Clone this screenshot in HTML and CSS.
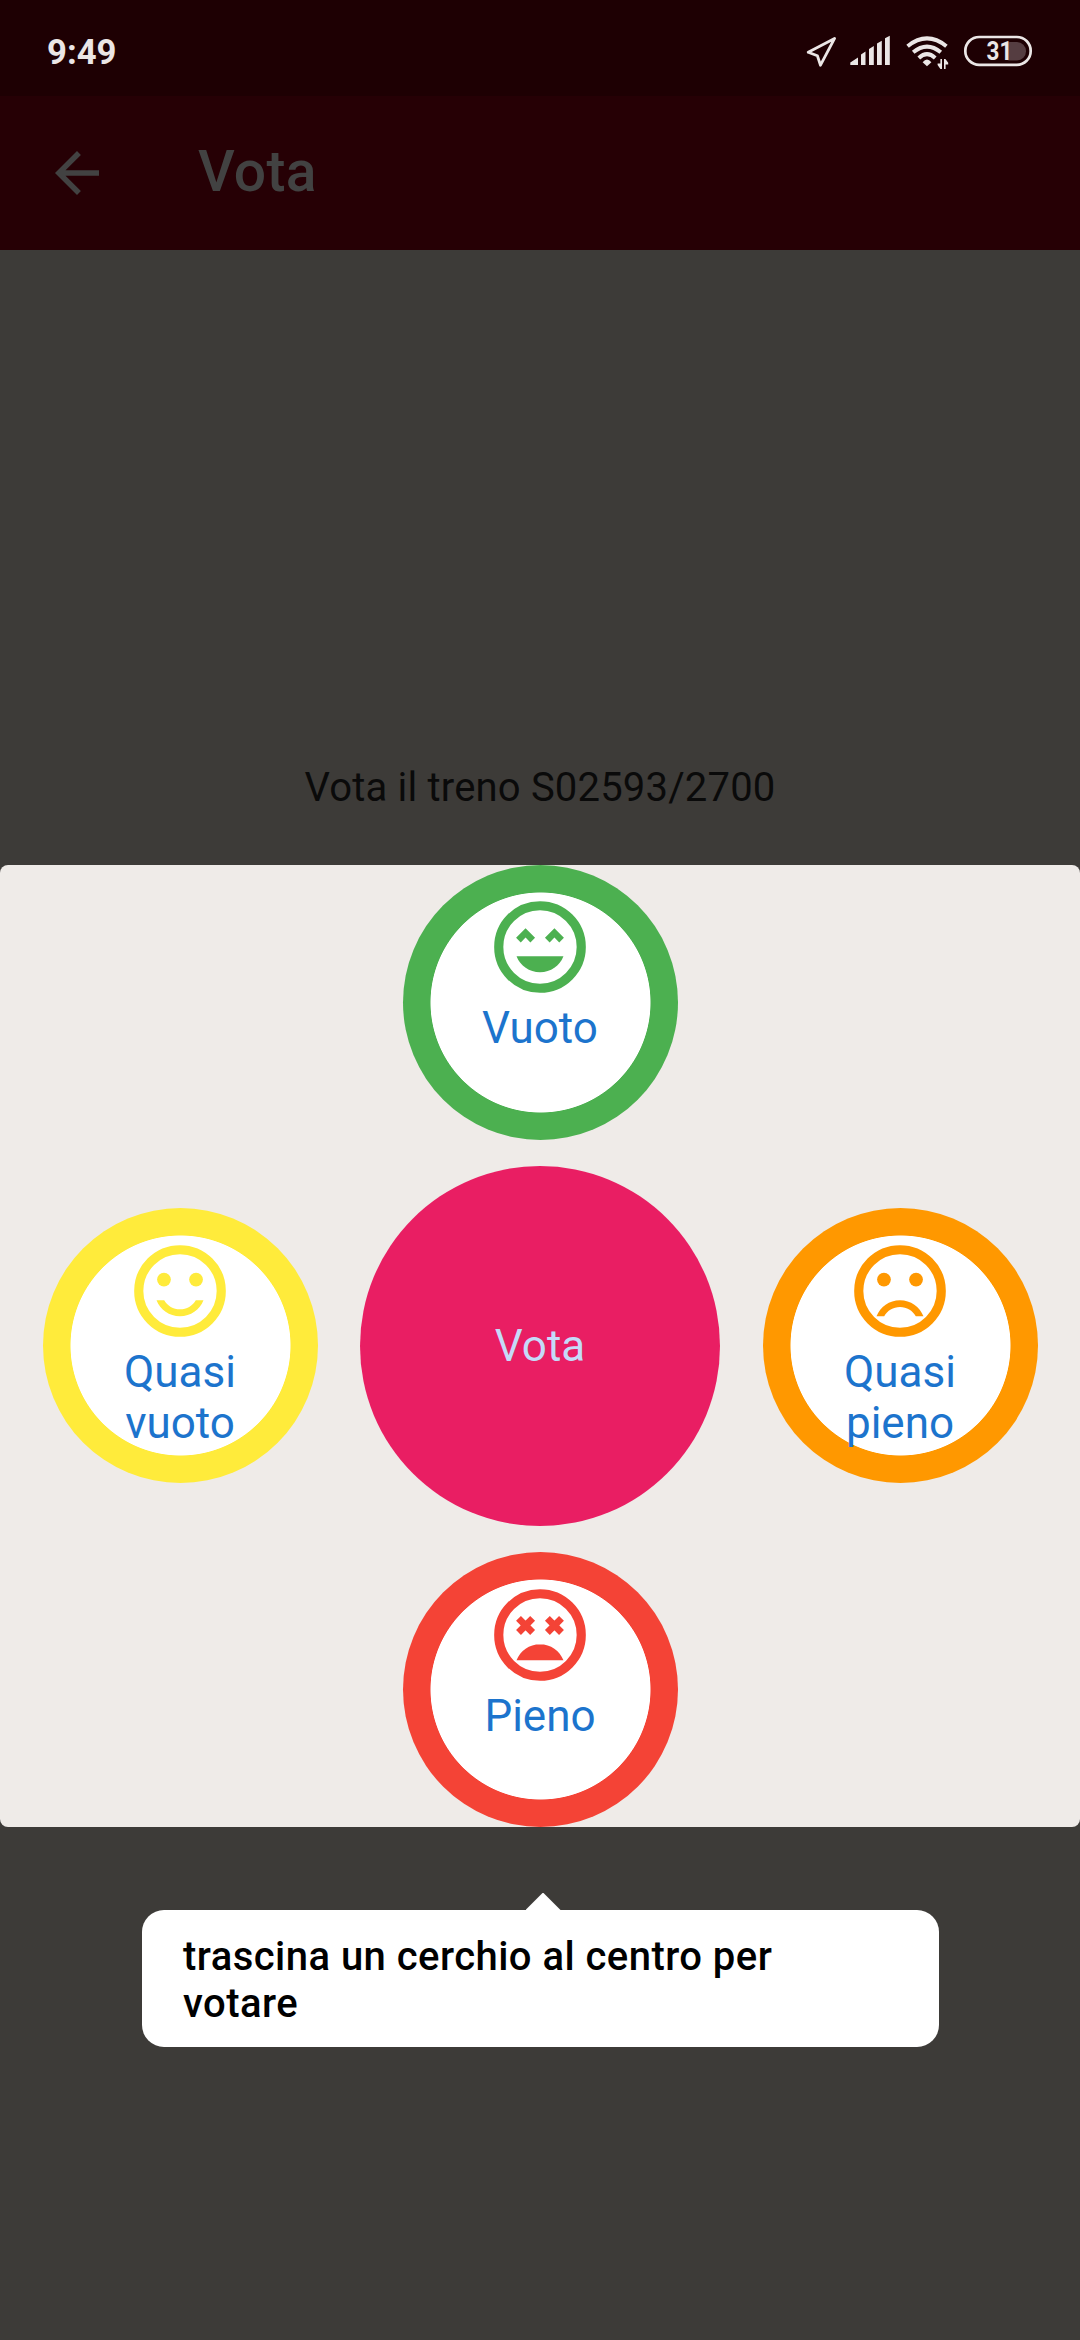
FILE: index.html
```html
<!DOCTYPE html>
<html lang="it">
<head>
<meta charset="utf-8">
<title>Vota</title>
<link rel="stylesheet" href="styles.css">
</head>
<body>
<div class="screen">
  <header class="status-bar">
    <span class="clock">9:49</span>
    <svg class="status-icons" viewBox="800 30 240 42" aria-hidden="true">
      <path class="outline" d="M834.6 38.4 808.2 52.3 817.4 55.8 820.5 65.2Z"/>
      <path class="solid" d="M850.3 65V62.6L858 57.6V65ZM861 65V54.6L865.5 51.6V65ZM869 65V49L873.8 46V65ZM877 65V43.6L881.8 40.8V65ZM885 65V38.2L889.8 35.8V65Z"/>
      <path class="arc" d="M907.6 46.2Q927 30.6 946.4 46.2M913.2 52.3Q927 41 940.8 52.3M918.8 58Q927 50.4 935.2 58"/>
      <path class="solid" d="M927 66.3 922.6 62.2Q927 56.6 931.4 62.2Z"/>
      <path class="solid" d="M940.4 59H942V69H940.4L937.6 65V63.6H940.4ZM944 59H945.4L948.2 62.8V64.4H945.6V69H944Z"/>
      <rect class="charge" x="1000" y="42" width="26" height="18.5" rx="9"/>
      <rect class="mask" x="992" y="41" width="15.5" height="21"/>
      <rect class="battery" x="965.3" y="37" width="65.4" height="27.8" rx="13.9"/>
      <text class="level" x="986.6" y="60.3" textLength="25.8" lengthAdjust="spacingAndGlyphs">31</text>
    </svg>
  </header>
  <nav class="app-bar">
    <svg class="back" viewBox="0 0 24 24" aria-label="Indietro"><path d="M20 11H7.83l5.59-5.59L12 4l-8 8 8 8 1.41-1.41L7.83 13H20v-2z"/></svg>
    <h1 class="title">Vota</h1>
  </nav>
  <main class="content">
    <p class="train">Vota il treno S02593/2700</p>
    <section class="board">
      <div class="choice empty">
        <svg class="face" viewBox="0 0 24 24"><circle class="ring" cx="12" cy="12" r="9"/><path d="M12 17.5c2.33 0 4.32-1.45 5.12-3.5H6.88c.8 2.05 2.79 3.5 5.12 3.5Z"/><path d="M8.85 7.9 10.92 9.97 9.9 11 8.85 9.95 7.8 11 6.78 9.97Z"/><path d="M15.15 7.9 17.22 9.97 16.2 11 15.15 9.95 14.1 11 13.08 9.97Z"/></svg>
        <span>Vuoto</span>
      </div>
      <div class="choice almost-empty">
        <svg class="face" viewBox="0 0 24 24"><circle class="ring" cx="12" cy="12" r="9"/><circle cx="8.5" cy="9.5" r="1.5"/><circle cx="15.5" cy="9.5" r="1.5"/><path d="M12 16c-1.48 0-2.75-.81-3.45-2H6.88c.8 2.05 2.79 3.5 5.12 3.5s4.32-1.45 5.12-3.5h-1.67c-.7 1.19-1.97 2-3.45 2Z"/></svg>
        <span>Quasi<br>vuoto</span>
      </div>
      <div class="target">Vota</div>
      <div class="choice almost-full">
        <svg class="face" viewBox="0 0 24 24"><circle class="ring" cx="12" cy="12" r="9"/><circle cx="8.5" cy="9.5" r="1.5"/><circle cx="15.5" cy="9.5" r="1.5"/><path d="M12 14c-2.33 0-4.32 1.45-5.12 3.5h1.67c.69-1.19 1.97-2 3.45-2s2.75.81 3.45 2h1.67c-.8-2.05-2.79-3.5-5.12-3.5Z"/></svg>
        <span>Quasi<br>pieno</span>
      </div>
      <div class="choice full">
        <svg class="face" viewBox="0 0 24 24"><circle class="ring" cx="12" cy="12" r="9"/><path d="M12 14c-2.33 0-4.32 1.45-5.12 3.5h10.24c-.8-2.05-2.79-3.5-5.12-3.5Z"/><path class="cross" d="M7.31 8.38 10.39 11.46M10.39 8.38 7.31 11.46M13.61 8.38 16.69 11.46M16.69 8.38 13.61 11.46"/></svg>
        <span>Pieno</span>
      </div>
    </section>
    <div class="hint">trascina un cerchio al centro per votare</div>
  </main>
</div>
</body>
</html>
```
FILE: styles.css
```css
* { box-sizing: border-box; }

body {
  margin: 0;
  font-family: Roboto, sans-serif;
}

.screen {
  width: 1080px;
  height: 2340px;
  display: flex;
  flex-direction: column;
  overflow: hidden;
  background: #3d3b38;
}

/* Status bar */
.status-bar {
  height: 96px;
  flex: none;
  display: flex;
  align-items: flex-start;
  justify-content: space-between;
  padding: 30px 40px 0 47px;
  background: #1e0003;
}

.clock {
  padding-top: 1px;
  color: #ebe6e6;
  font-size: 34.7px;
  font-weight: 700;
  line-height: 43px;
}

.status-icons { width: 240px; height: 42px; }
.solid { fill: #ebe6e6; }
.outline { fill: none; stroke: #ebe6e6; stroke-width: 2.8; stroke-linejoin: round; }
.arc { fill: none; stroke: #ebe6e6; stroke-width: 4; }
.battery { fill: none; stroke: #ebe6e6; stroke-width: 2.7; }
.charge { fill: #553d41; }
.mask { fill: #1e0003; }
.level { fill: #ebe6e6; font-size: 25px; font-weight: 700; }

/* App bar */
.app-bar {
  height: 154px;
  flex: none;
  display: flex;
  align-items: center;
  gap: 88px;
  padding-left: 44px;
  background: #260005;
}

.back { width: 66px; height: 66px; fill: #424242; }

.title {
  margin: 0;
  padding-bottom: 3px;
  color: #424242;
  font-size: 57px;
  font-weight: 500;
  line-height: 66px;
  letter-spacing: 0.3px;
}

/* Page content */
.content {
  flex: 1;
  display: flex;
  flex-direction: column;
  align-items: center;
  padding-top: 513.5px;
}

.train {
  margin: 0 0 54px;
  color: #0a0a0a;
  font-size: 40px;
  line-height: 47px;
  letter-spacing: 0.18px;
}

.board {
  width: 1080px;
  height: 962.5px;
  display: grid;
  grid-template-columns: repeat(3, 360px);
  grid-template-rows: 275px 360px 275px;
  align-content: space-between;
  place-items: center;
  border-radius: 8px;
  background: #efebe8;
}

.choice {
  width: 275px;
  height: 275px;
  display: flex;
  flex-direction: column;
  align-items: center;
  padding: 27.5px;
  border-radius: 50%;
  background: radial-gradient(circle, #fff 109.6px, currentColor 110.4px);
}

.choice span {
  padding-top: 1px;
  color: #1c74cd;
  font-size: 44px;
  line-height: 51.6px;
  text-align: center;
}

.empty { grid-area: 1 / 2; color: #4cb050; }
.almost-empty { grid-area: 2 / 1; color: #ffeb3b; }
.almost-full { grid-area: 2 / 3; color: #ff9800; }
.full { grid-area: 3 / 2; color: #f44336; }

.face { width: 110px; height: 110px; flex: none; fill: currentColor; }
.ring { fill: none; stroke: currentColor; stroke-width: 2; }
.cross { fill: none; stroke: currentColor; stroke-width: 1.5; }

.target {
  grid-area: 2 / 2;
  width: 360px;
  height: 360px;
  display: grid;
  place-items: center;
  padding-top: 2px;
  border-radius: 50%;
  background: #e91e63;
  color: #c5daf8;
  font-size: 44px;
  line-height: 51.6px;
}

/* Tooltip under the board */
.hint {
  position: relative;
  width: 797px;
  height: 137px;
  margin-top: 83px;
  padding: 23px 120px 0 41.5px;
  border-radius: 22px;
  background: #fff;
  color: #000;
  font-size: 40px;
  font-weight: 500;
  line-height: 47px;
  letter-spacing: 0.46px;
}

.hint::before {
  content: "";
  position: absolute;
  left: 384px;
  bottom: 100%;
  width: 35px;
  height: 17.5px;
  background: #fff;
  clip-path: polygon(50% 0, 100% 100%, 0 100%);
}
```
